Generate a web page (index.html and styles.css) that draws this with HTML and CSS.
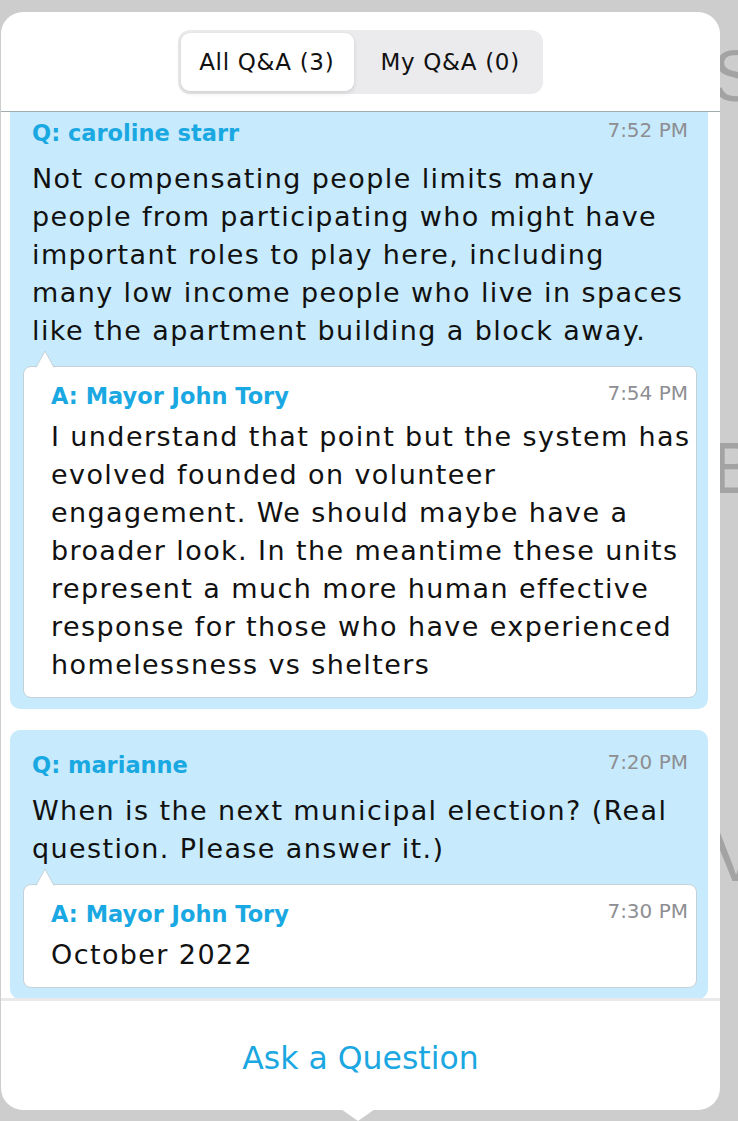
FILE: index.html
```html
<!DOCTYPE html>
<html lang="en">
<head>
  <meta charset="UTF-8" />
  <title>Q&amp;A</title>
  <link rel="stylesheet" href="styles.css">
</head>
<body>
  <div class="backdrop">
    <span class="bg-letter bg-s">S</span>
    <span class="bg-letter bg-b">B</span>
    <span class="bg-letter bg-v">V</span>
  </div>

  <div class="popup">
    <div class="popup-header">
      <div class="segmented">
        <button class="segment active">All Q&amp;A (3)</button>
        <button class="segment">My Q&amp;A (0)</button>
      </div>
    </div>

    <div class="qa-list">
      <div class="qa-card first">
        <div class="qa-head">
          <span class="qa-name">Q: caroline starr</span>
          <span class="qa-time">7:52 PM</span>
        </div>
        <p class="qa-text">Not compensating people limits many<br>
          people from participating who might have<br>
          important roles to play here, including<br>
          many low income people who live in spaces<br>
          like the apartment building a block away.</p>
        <div class="answer">
          <svg class="notch" width="22" height="18" viewBox="0 0 22 18"><path d="M1 17.5 L10 1 L19 17.5" fill="#fff" stroke="#c3d2d9" stroke-width="1"/></svg>
          <div class="qa-head">
            <span class="qa-name">A: Mayor John Tory</span>
            <span class="qa-time">7:54 PM</span>
          </div>
          <p class="answer-text">I understand that point but the system has<br>
            evolved founded on volunteer<br>
            engagement. We should maybe have a<br>
            broader look. In the meantime these units<br>
            represent a much more human effective<br>
            response for those who have experienced<br>
            homelessness vs shelters</p>
        </div>
      </div>

      <div class="qa-card">
        <div class="qa-head">
          <span class="qa-name">Q: marianne</span>
          <span class="qa-time">7:20 PM</span>
        </div>
        <p class="qa-text">When is the next municipal election? (Real<br>
          question. Please answer it.)</p>
        <div class="answer">
          <svg class="notch" width="22" height="18" viewBox="0 0 22 18"><path d="M1 17.5 L10 1 L19 17.5" fill="#fff" stroke="#c3d2d9" stroke-width="1"/></svg>
          <div class="qa-head">
            <span class="qa-name">A: Mayor John Tory</span>
            <span class="qa-time">7:30 PM</span>
          </div>
          <p class="answer-text">October 2022</p>
        </div>
      </div>
    </div>

    <div class="popup-footer">
      <button class="ask-btn">Ask a Question</button>
    </div>
  </div>
</body>
</html>
```

FILE: styles.css
```css
body {
  margin: 0;
  width: 738px;
  height: 1121px;
  overflow: hidden;
  background: #cdcdcd;
  font-family: "DejaVu Sans", Verdana, sans-serif;
  position: relative;
}

.backdrop {
  position: absolute;
  inset: 0;
  overflow: hidden;
}

.bg-letter {
  position: absolute;
  left: 712px;
  font-family: "Liberation Sans", sans-serif;
  font-size: 72px;
  color: #a3a3a3;
  line-height: 1;
}

.bg-s { top: 40px; }
.bg-b { top: 432px; }
.bg-v { top: 820px; }

.popup {
  position: relative;
  margin: 12px 0 0 1px;
  width: 719px;
  height: 1098px;
  background: #ffffff;
  border-radius: 22px;
  display: flex;
  flex-direction: column;
}

.popup::after {
  content: "";
  position: absolute;
  left: 340px;
  bottom: -11px;
  border-left: 17px solid transparent;
  border-right: 17px solid transparent;
  border-top: 12px solid #ffffff;
}

.popup-header {
  height: 100px;
  display: flex;
  justify-content: center;
  align-items: flex-start;
  padding-top: 18px;
  box-sizing: border-box;
  border-bottom: 1px solid #a5acb0;
  flex-shrink: 0;
}

.segmented {
  display: flex;
  background: #ebebed;
  border-radius: 12px;
  padding: 3px;
  gap: 2px;
}

.segment {
  font-family: "DejaVu Sans", sans-serif;
  font-size: 23px;
  letter-spacing: 0.7px;
  color: #111;
  border: none;
  background: transparent;
  height: 58px;
  padding: 0 20px 0 24px;
  border-radius: 9px;
}

.segment.active {
  background: #ffffff;
  box-shadow: 0 2px 5px rgba(0,0,0,0.12);
  padding: 0 20px 0 18px;
}

.qa-list {
  flex: 1;
  overflow: hidden;
  padding: 0 12px 0 9px;
  display: flex;
  flex-direction: column;
  gap: 21px;
}

.qa-card {
  background: #c7ebfc;
  border-radius: 10px;
  padding: 21px 11px 11px 13px;
  flex-shrink: 0;
}

.qa-card.first {
  margin-top: -14px;
}

.qa-head {
  display: flex;
  justify-content: space-between;
  align-items: flex-start;
}

.qa-card > .qa-head {
  padding: 0 9px;
}

.qa-card > .qa-text {
  padding-left: 9px;
}

.qa-name {
  font-weight: bold;
  font-size: 22.5px;
  line-height: 28px;
  color: #1aa8e2;
}

.qa-time {
  font-size: 20px;
  line-height: 22px;
  color: #8e8e93;
}

.qa-text,
.answer-text {
  margin: 13px 0 0;
  font-size: 27px;
  letter-spacing: 1.4px;
  line-height: 38px;
  color: #111;
  white-space: nowrap;
}

.answer {
  position: relative;
  margin-top: 16px;
  background: #ffffff;
  border: 1px solid #c3d2d9;
  border-radius: 8px;
  padding: 15px 8px 13px 27px;
}

.answer .notch {
  position: absolute;
  left: 11px;
  top: -17px;
}

.answer-text {
  margin-top: 8px;
}

.popup-footer {
  height: 112px;
  flex-shrink: 0;
  border-top: 3px solid #e9e9eb;
  box-sizing: border-box;
  display: flex;
  justify-content: center;
  align-items: center;
  padding-top: 4px;
}

.ask-btn {
  font-family: "DejaVu Sans", sans-serif;
  font-size: 31.5px;
  color: #1ba7e1;
  background: none;
  border: none;
  padding: 0;
}
```
